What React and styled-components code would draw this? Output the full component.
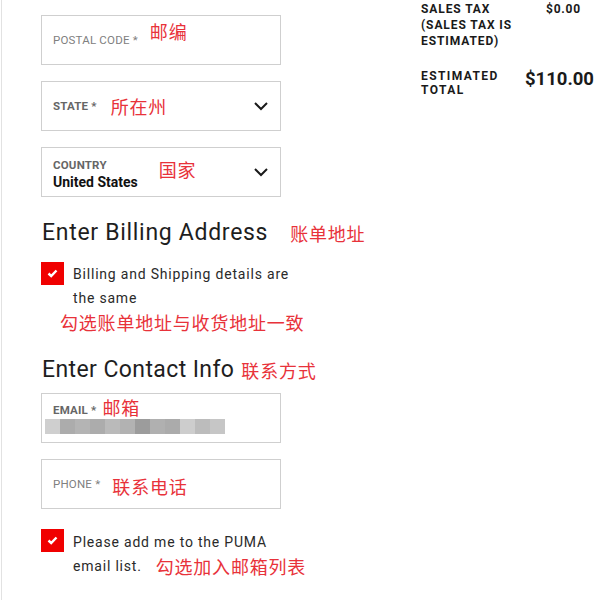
import styled, { createGlobalStyle } from "styled-components";

const GlobalStyle = createGlobalStyle`
  body {
    margin: 0;
    background: #fff;
    font-family: Roboto, "Liberation Sans", "Noto Sans CJK SC", sans-serif;
    color: #222;
  }
`;

const blurBlocks = ["#cfcfcf", "#acacac", "#b4b4b4", "#acacac", "#bababa", "#b2b2b2", "#9c9c9c", "#b0b0b0", "#ababab", "#cdcdcd", "#bcbcbc", "#c6c6c6"];

const Page = styled.div`
  display: flex;
  margin-left: 1px;
  border-left: 1px solid #e2e2e2;
  min-height: 600px;
`;

const FormColumn = styled.div`
  width: 380px;
  padding: 15px 0 0 39px;
  display: flex;
  flex-direction: column;
  align-items: flex-start;
`;

const SummaryColumn = styled.div`
  flex: 1;
  padding: 1px 6px 0 0;
  display: flex;
  flex-direction: column;
  gap: 20px;
`;

const SummaryRow = styled.div`
  display: flex;
  justify-content: space-between;
  align-items: flex-start;
`;

const SummaryLabel = styled.div`
  font-size: 12px;
  font-weight: 700;
  line-height: ${(p) => p.$lh || 16}px;
  letter-spacing: ${(p) => p.$ls || 0.9}px;
  text-transform: uppercase;
  color: #1a1a1a;
  width: 100px;
`;

const SummaryValue = styled.div`
  font-size: ${(p) => (p.$big ? 18.5 : 12)}px;
  font-weight: 700;
  letter-spacing: ${(p) => (p.$big ? 0 : 0.8)}px;
  line-height: ${(p) => (p.$big ? 20 : 16)}px;
  color: #1a1a1a;
  margin: ${(p) => (p.$big ? "0" : "0 13px 0 0")};
`;

const Field = styled.div`
  box-sizing: border-box;
  width: 240px;
  height: 50px;
  border: 1px solid #cfcfcf;
  margin-bottom: 16px;
  padding: 0 11px;
  display: flex;
  align-items: center;
  justify-content: space-between;
`;

const FieldBody = styled.div`
  display: flex;
  flex-direction: column;
  justify-content: center;
  padding-top: ${(p) => p.$pt || 0}px;
`;

const LabelLine = styled.div`
  display: flex;
  align-items: center;
  gap: 10px;
  height: 14px;
`;

const FieldLabel = styled.span`
  font-size: 11.5px;
  text-transform: uppercase;
  letter-spacing: 0.2px;
  font-weight: ${(p) => (p.$bold ? 700 : 400)};
  color: ${(p) => (p.$bold ? "#666" : "#808080")};
  line-height: 14px;
  white-space: nowrap;
`;

const FieldValue = styled.span`
  font-size: 14px;
  font-weight: 700;
  color: #111;
  line-height: 18px;
  margin-top: 1px;
`;

const Note = styled.span`
  font-family: "Noto Sans CJK SC", sans-serif;
  font-size: 18px;
  font-weight: 400;
  letter-spacing: 0.8px;
  color: #e8323a;
  line-height: 24px;
  white-space: nowrap;
  margin-left: ${(p) => p.$gap || 0}px;
  transform: translateY(${(p) => p.$dy || 0}px);
  display: inline-block;
  vertical-align: top;
`;

const Blur = styled.div`
  display: flex;
  margin: 2px 0 0 -8px;
  height: 15px;
`;

const BlurBlock = styled.span`
  width: 15px;
  height: 15px;
  background: ${(p) => p.$c};
`;

const Heading = styled.h2`
  margin: ${(p) => p.$top}px 0 ${(p) => p.$bottom}px 1px;
  font-size: 23px;
  font-weight: 400;
  line-height: 30px;
  letter-spacing: ${(p) => p.$ls}px;
  color: #1e1e1e;
  display: flex;
  align-items: center;
`;

const CheckRow = styled.div`
  display: flex;
  align-items: flex-start;
  gap: 9px;
  margin-top: ${(p) => p.$top || 0}px;
`;

const Box = styled.span`
  flex: none;
  width: 23px;
  height: 23px;
  background: #f00000;
  display: flex;
  align-items: center;
  justify-content: center;
  margin-top: ${(p) => p.$top || 0}px;
`;

const CheckText = styled.div`
  font-size: 14px;
  line-height: 24px;
  letter-spacing: 0.8px;
  color: #2a2a2a;
  width: ${(p) => p.$w || "226px"};
  white-space: ${(p) => (p.$w ? "nowrap" : "normal")};
`;

const NoteLine = styled.div`
  margin-left: 19px;
  height: 24px;
`;

const Chevron = () => (
  <svg width="16" height="10" viewBox="0 0 16 10">
    <polyline points="2,2 8,8 14,2" fill="none" stroke="#1a1a1a" strokeWidth="2" />
  </svg>
);

const Tick = () => (
  <svg width="11" height="9" viewBox="0 0 11 9">
    <polyline points="1.5,4.5 4.2,7 9.5,1.5" fill="none" stroke="#fff" strokeWidth="2.4" />
  </svg>
);

export default function App() {
  return (
    <>
      <GlobalStyle />
      <Page>
        <FormColumn>
          <Field>
            <LabelLine>
              <FieldLabel>Postal Code *</FieldLabel>
              <Note $gap={2} $dy={-9}>邮编</Note>
            </LabelLine>
          </Field>
          <Field>
            <LabelLine>
              <FieldLabel $bold>State *</FieldLabel>
              <Note $gap={4}>所在州</Note>
            </LabelLine>
            <Chevron />
          </Field>
          <Field>
            <FieldBody $pt={4}>
              <LabelLine>
                <FieldLabel $bold>Country</FieldLabel>
                <Note $gap={42} $dy={4}>国家</Note>
              </LabelLine>
              <FieldValue>United States</FieldValue>
            </FieldBody>
            <Chevron />
          </Field>

          <Heading $top={5} $bottom={14} $ls={0.7}>
            Enter Billing Address
            <Note $gap={22}>账单地址</Note>
          </Heading>
          <CheckRow>
            <Box>
              <Tick />
            </Box>
            <CheckText>Billing and Shipping details are the same</CheckText>
          </CheckRow>
          <NoteLine>
            <Note>勾选账单地址与收货地址一致</Note>
          </NoteLine>

          <Heading $top={21} $bottom={8} $ls={0.4}>
            Enter Contact Info
            <Note $gap={7}>联系方式</Note>
          </Heading>
          <Field>
            <FieldBody>
              <LabelLine>
                <FieldLabel $bold>Email *</FieldLabel>
                <Note $gap={-4} $dy={-3}>邮箱</Note>
              </LabelLine>
              <Blur>
                {blurBlocks.map((c, i) => (
                  <BlurBlock key={i} $c={c} />
                ))}
              </Blur>
            </FieldBody>
          </Field>
          <Field>
            <LabelLine>
              <FieldLabel>Phone *</FieldLabel>
              <Note $gap={2} $dy={2}>联系电话</Note>
            </LabelLine>
          </Field>
          <CheckRow $top={5}>
            <Box $top={-1}>
              <Tick />
            </Box>
            <CheckText $w="auto">
              Please add me to the PUMA
              <br />
              email list.
              <Note $gap={14}>勾选加入邮箱列表</Note>
            </CheckText>
          </CheckRow>
        </FormColumn>

        <SummaryColumn>
          <SummaryRow>
            <SummaryLabel>Sales Tax (Sales Tax is Estimated)</SummaryLabel>
            <SummaryValue>$0.00</SummaryValue>
          </SummaryRow>
          <SummaryRow>
            <SummaryLabel $lh={14} $ls={1.4}>Estimated Total</SummaryLabel>
            <SummaryValue $big>$110.00</SummaryValue>
          </SummaryRow>
        </SummaryColumn>
      </Page>
    </>
  );
}
